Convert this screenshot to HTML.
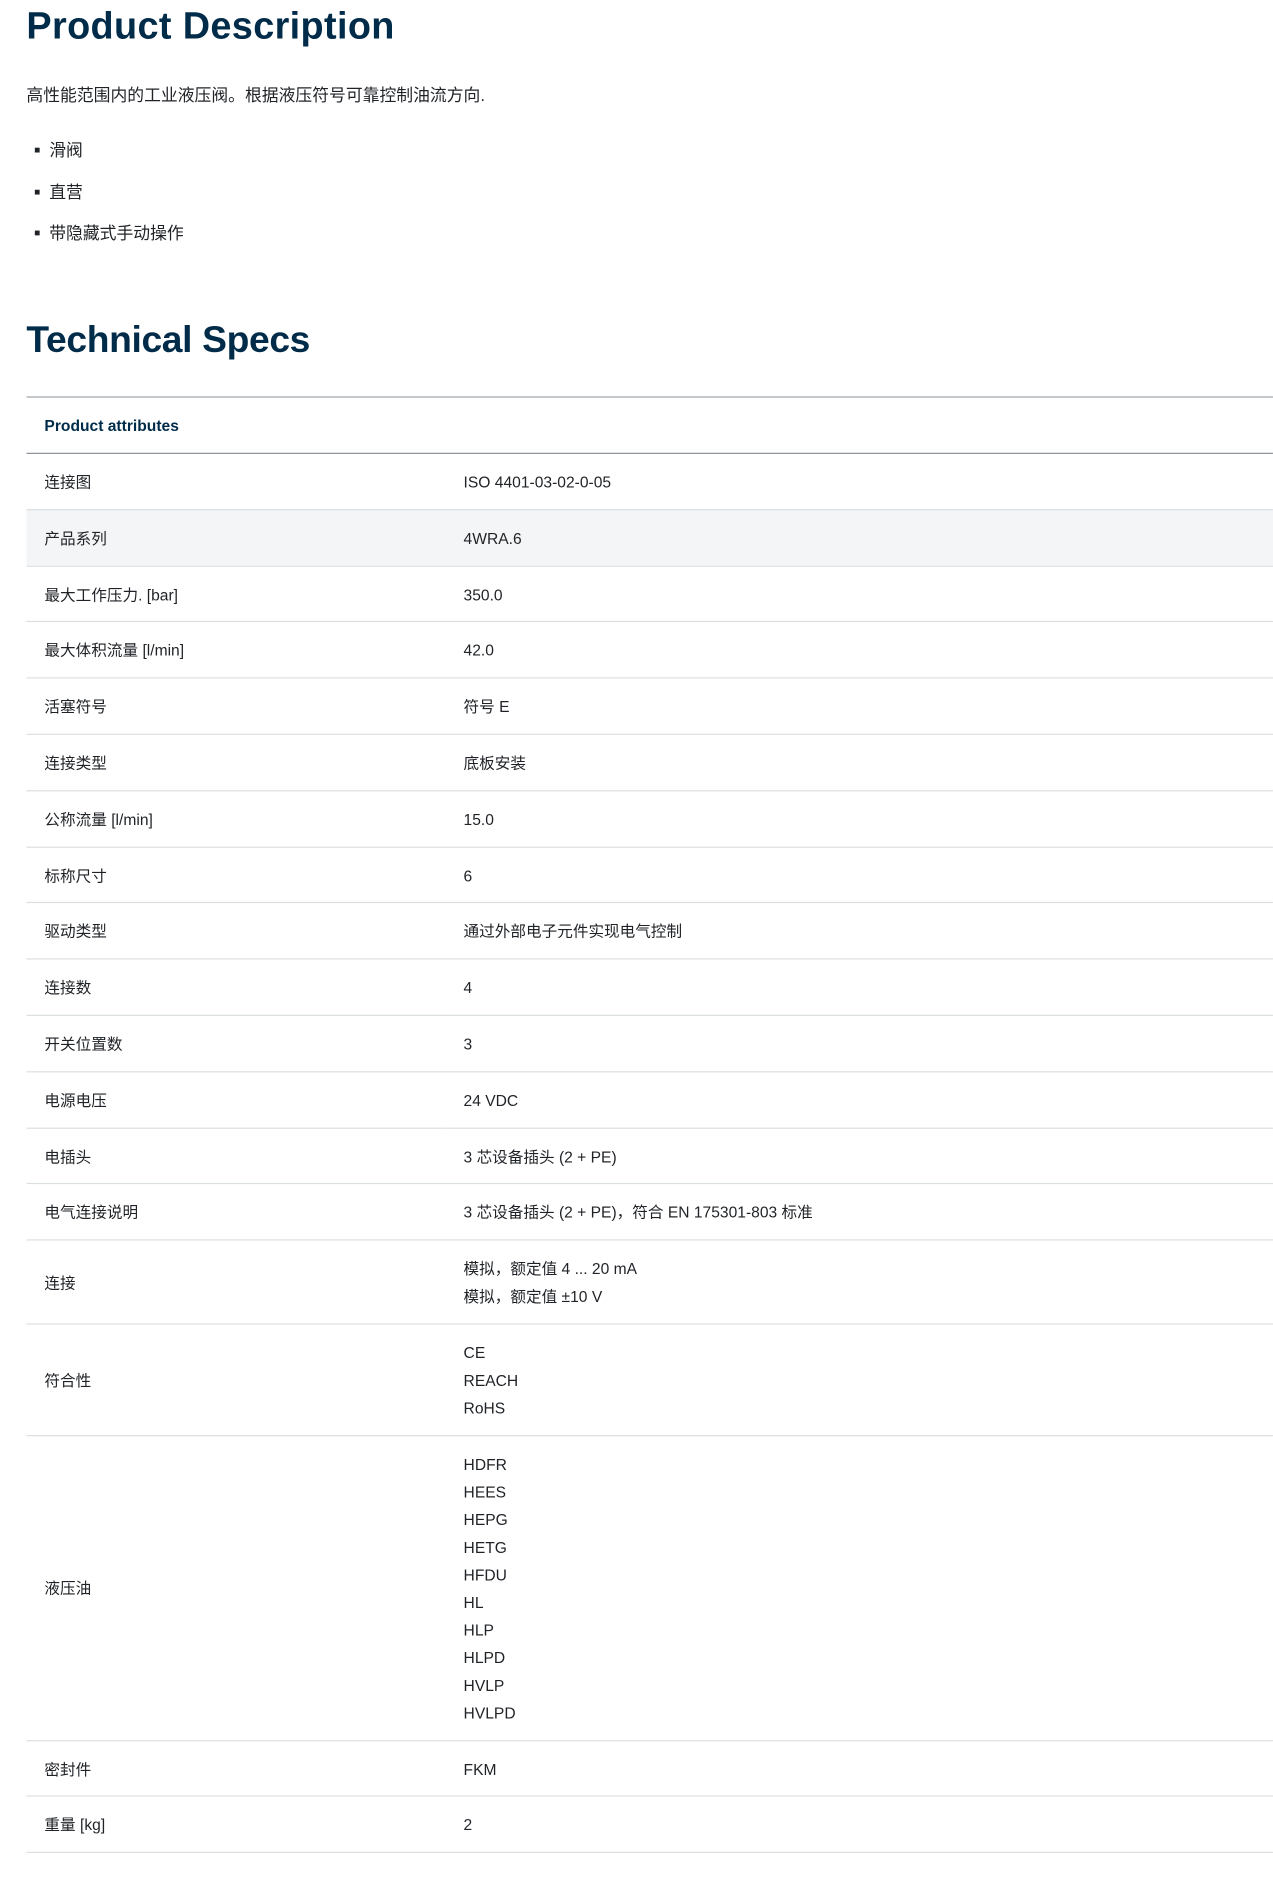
<!DOCTYPE html>
<html><head><meta charset="utf-8"><style>
html,body{margin:0;padding:0;background:#fff;}
body{width:1273px;height:1885px;overflow:hidden;}
#w{width:1060px;transform:scale(1.2009);transform-origin:0 0;position:relative;font-family:"Liberation Sans","Noto Sans CJK SC",sans-serif;color:#1f2226;}
h1,h2{margin:0;position:absolute;left:22px;font-weight:bold;color:#002b49;font-size:31.5px;letter-spacing:0.3px;}
h1{top:3px;}
h2{top:265px;letter-spacing:-0.3px;font-size:31px;}
p{position:absolute;left:22px;top:69px;margin:0;font-size:14px;}
ul{position:absolute;left:22px;top:114px;margin:0;padding:0;list-style:none;font-size:14px;}
li{height:34.5px;line-height:22px;padding-left:19px;position:relative;}
li:before{content:"";position:absolute;left:7px;top:9px;width:4px;height:4px;background:#1f2226;}
table{position:absolute;left:22px;top:330px;width:1038px;border-collapse:collapse;font-size:13px;}
th{text-align:left;font-weight:bold;color:#002b49;border-top:1px solid #8a9097;border-bottom:1px solid #8a9097;padding:0 15px;height:46px;}
td{border-bottom:1px solid #dcdfe2;padding:12px 15px 10.8px;line-height:23px;vertical-align:middle;}
td:first-child{width:319px;}
tr.g td{background:#f4f5f6;}
</style></head><body><div id="w">
<h1>Product Description</h1>
<p>高性能范围内的工业液压阀。根据液压符号可靠控制油流方向.</p>
<ul><li>滑阀</li><li>直营</li><li>带隐藏式手动操作</li></ul>
<h2>Technical Specs</h2>
<table>
<tr><th colspan="2">Product attributes</th></tr>
<tr><td>连接图</td><td>ISO 4401-03-02-0-05</td></tr>
<tr class="g"><td>产品系列</td><td>4WRA.6</td></tr>
<tr><td>最大工作压力. [bar]</td><td>350.0</td></tr>
<tr><td>最大体积流量 [l/min]</td><td>42.0</td></tr>
<tr><td>活塞符号</td><td>符号 E</td></tr>
<tr><td>连接类型</td><td>底板安装</td></tr>
<tr><td>公称流量 [l/min]</td><td>15.0</td></tr>
<tr><td>标称尺寸</td><td>6</td></tr>
<tr><td>驱动类型</td><td>通过外部电子元件实现电气控制</td></tr>
<tr><td>连接数</td><td>4</td></tr>
<tr><td>开关位置数</td><td>3</td></tr>
<tr><td>电源电压</td><td>24 VDC</td></tr>
<tr><td>电插头</td><td>3 芯设备插头 (2 + PE)</td></tr>
<tr><td>电气连接说明</td><td>3 芯设备插头 (2 + PE)，符合 EN 175301-803 标准</td></tr>
<tr><td>连接</td><td>模拟，额定值 4 ... 20 mA<br>模拟，额定值 ±10 V</td></tr>
<tr><td>符合性</td><td>CE<br>REACH<br>RoHS</td></tr>
<tr><td>液压油</td><td>HDFR<br>HEES<br>HEPG<br>HETG<br>HFDU<br>HL<br>HLP<br>HLPD<br>HVLP<br>HVLPD</td></tr>
<tr><td>密封件</td><td>FKM</td></tr>
<tr><td>重量 [kg]</td><td>2</td></tr>
</table>
</div></body></html>
